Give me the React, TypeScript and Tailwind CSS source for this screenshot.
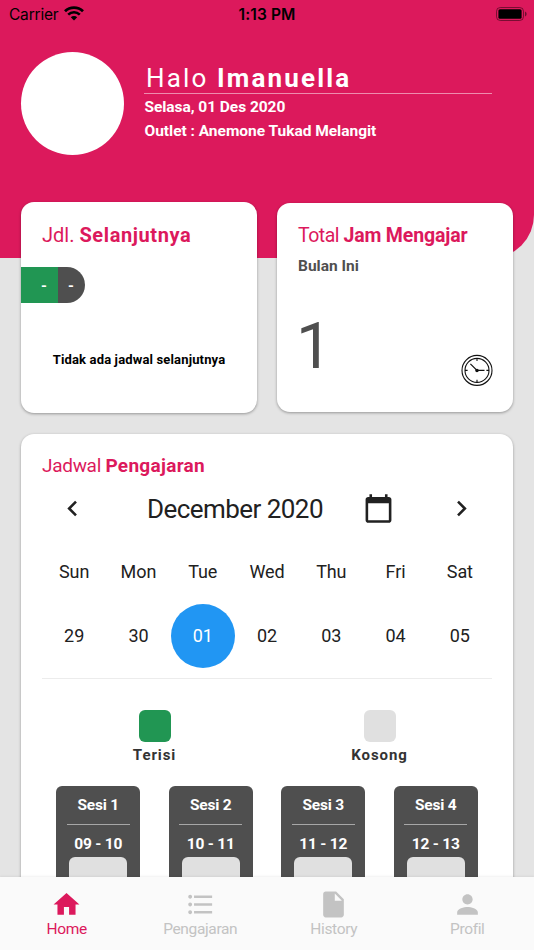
import type { ReactNode } from 'react'
import {
  MdCalendarToday,
  MdChevronLeft,
  MdChevronRight,
  MdFormatListBulleted,
  MdHome,
  MdInsertDriveFile,
  MdPerson,
} from 'react-icons/md'

const days = [
  { name: 'Sun', date: '29' },
  { name: 'Mon', date: '30' },
  { name: 'Tue', date: '01' },
  { name: 'Wed', date: '02' },
  { name: 'Thu', date: '03' },
  { name: 'Fri', date: '04' },
  { name: 'Sat', date: '05' },
]

const sessions = [
  { name: 'Sesi 1', time: '09 - 10' },
  { name: 'Sesi 2', time: '10 - 11' },
  { name: 'Sesi 3', time: '11 - 12' },
  { name: 'Sesi 4', time: '12 - 13' },
]

function StatusBar() {
  return (
    <div className="grid h-7 grid-cols-3 items-center pr-[7px] pl-[9px] font-['Inter',sans-serif] text-black">
      <div className="flex items-center gap-[6px]">
        <span className="text-[15.5px] leading-[29px] tracking-[-0.2px]">Carrier</span>
        <svg className="-mt-[2px]" width="20" height="15" viewBox="0 0 20 15" fill="none" stroke="black">
          <path d="M1 5.2a13 13 0 0 1 18 0" strokeWidth="2.8" />
          <path d="M4.2 8.6a8.4 8.4 0 0 1 11.6 0" strokeWidth="2.6" />
          <path d="M10 14.4 6.8 11.2a4.6 4.6 0 0 1 6.4 0z" fill="black" stroke="none" />
        </svg>
      </div>
      <span className="-ml-[2px] text-center text-[15.5px] leading-[29px] font-semibold tracking-[0.1px]">1:13 PM</span>
      <svg className="-mt-[2px] ml-auto" width="31" height="14" viewBox="0 0 31 14">
        <rect x="0.5" y="0.5" width="27" height="13" rx="3.8" fill="none" stroke="black" strokeOpacity="0.45" />
        <rect x="2.4" y="2.2" width="23.2" height="9.6" rx="1.6" />
        <path d="M29 4.6v4.8c1-.4 1.6-1.3 1.6-2.4S30 5 29 4.6z" fillOpacity="0.5" />
      </svg>
    </div>
  )
}

function ClockIcon() {
  return (
    <svg width="32" height="32" viewBox="0 0 32 32" fill="none" stroke="#111" strokeWidth="1.1">
      <circle cx="16" cy="16.4" r="15" />
      <circle cx="16" cy="16.4" r="12" />
      <path d="M16 4.4V7M16 25.8v2.6M4 16.4h2.6M25.4 16.4H28" />
      <path d="M9.4 9.8 16 16.4h7.5" strokeWidth="1.2" />
      <circle cx="16" cy="16.4" r="1.2" fill="#111" />
    </svg>
  )
}

function Card({ className, children }: { className: string; children: ReactNode }) {
  return <section className={`rounded-[13px] bg-white shadow-[0_1px_3px_rgba(0,0,0,0.35)] ${className}`}>{children}</section>
}

function Calendar() {
  return (
    <div className="text-[#212121]">
      <div className="mt-[10px] flex h-10 items-center">
        <div className="flex w-[61px] justify-center">
          <MdChevronLeft size={31} />
        </div>
        <span className="ml-[44px] w-[178px] pt-[2px] text-[26px] leading-10 tracking-[-0.55px] whitespace-nowrap">December 2020</span>
        <MdCalendarToday size={31} className="mt-px ml-[38px]" />
        <div className="ml-auto flex w-[61px] justify-center">
          <MdChevronRight size={31} />
        </div>
      </div>
      <div className="mt-3 grid grid-cols-7 text-center text-[18px] tracking-[-0.1px]">
        {days.map((day) => (
          <div key={day.name}>
            <div className="h-16 leading-16">{day.name}</div>
            <div className={day.date === '01' ? 'h-16 rounded-full bg-[#2196f3] leading-16 text-white' : 'h-16 leading-16'}>{day.date}</div>
          </div>
        ))}
      </div>
      <div className="mt-[10px] h-px bg-[#ececec]" />
    </div>
  )
}

function NavItem({ icon, label, active }: { icon: ReactNode; label: string; active?: boolean }) {
  return (
    <div className={active ? 'flex flex-col items-center text-[#dc195c]' : 'flex flex-col items-center text-[#c3c3c3]'}>
      {icon}
      <span className="text-[15.5px] leading-[18px] tracking-[-0.35px]">{label}</span>
    </div>
  )
}

export default function App() {
  return (
    <div className="flex h-[950px] w-[534px] flex-col overflow-hidden bg-[#e4e4e4] font-['Roboto',sans-serif]">
      <main className="min-h-0 flex-1 overflow-hidden">
        <header className="h-[258px] rounded-br-[43px] bg-[#dc195c]">
          <StatusBar />
          <div className="mt-6 flex pr-[42px] pl-[21px] text-white">
            <div className="size-[103px] shrink-0 rounded-full bg-white" />
            <div className="ml-5 flex-1 whitespace-nowrap">
              <h1 className="mt-[10px] h-[31px] pl-[2px] text-[26px] leading-[33px] tracking-[2.15px]">
                Halo <span className="font-bold">Imanuella</span>
              </h1>
              <div className="h-px bg-white/50" />
              <p className="mt-[2px] pl-[0.5px] text-[15.5px] leading-[23px] font-bold tracking-[-0.05px]">Selasa, 01 Des 2020</p>
              <p className="pl-[0.5px] text-[15.5px] leading-[24px] font-bold tracking-[-0.02px]">Outlet : Anemone Tukad Melangit</p>
            </div>
          </div>
        </header>

        <div className="-mt-14 flex items-start justify-between px-[21px]">
          <Card className="h-[211px] w-[236px] whitespace-nowrap">
            <h2 className="pt-[21px] pl-[21px] text-[20px] leading-6 text-[#dc195c]">
              Jdl. <span className="font-bold tracking-[0.6px]">Selanjutnya</span>
            </h2>
            <div className="mt-[20px] flex h-9 text-[15px] leading-[38px] font-bold text-white">
              <div className="w-[37px] bg-[#219653] pl-[20px]">-</div>
              <div className="w-[27px] rounded-r-full bg-[#4f4f4f] pl-[10px]">-</div>
            </div>
            <p className="mt-[46px] text-center text-[13px] leading-[21px] font-bold tracking-[0.15px] text-black">Tidak ada jadwal selanjutnya</p>
          </Card>
          <Card className="mt-px h-[209px] w-[236px] px-[21px] whitespace-nowrap">
            <h2 className="pt-[21px] text-[19.5px] leading-6 text-[#dc195c]">
              <span className="tracking-[-0.5px]">Total </span>
              <span className="font-bold tracking-[-0.15px]">Jam Mengajar</span>
            </h2>
            <p className="mt-[7px] text-[15.5px] leading-[22px] font-bold text-[#4f4f4f]">Bulan Ini</p>
            <div className="mt-[37px] flex justify-between">
              <span className="-ml-[2px] text-[64px] leading-[65px] text-[#4f4f4f]">1</span>
              <div className="-mr-px mt-[40px]">
                <ClockIcon />
              </div>
            </div>
          </Card>
        </div>

        <Card className="mx-[21px] mt-[21px] h-[520px] px-[21px]">
          <h2 className="pt-5 text-[19px] leading-6 text-[#dc195c]">
            <span className="tracking-[-0.3px]">Jadwal </span>
            <span className="font-bold tracking-[0.3px]">Pengajaran</span>
          </h2>
          <Calendar />
          <div className="mt-[31px] grid grid-cols-2 text-[15px] leading-[26px] font-bold tracking-[0.9px] text-[#333]">
            <div className="flex flex-col items-center">
              <div className="size-8 rounded-[6px] bg-[#219653]" />
              Terisi
            </div>
            <div className="flex flex-col items-center">
              <div className="size-8 rounded-[6px] bg-[#e0e0e0]" />
              Kosong
            </div>
          </div>
          <div className="mt-[18px] grid grid-cols-4 justify-items-center">
            {sessions.map((session) => (
              <div key={session.name} className="flex h-[150px] w-[84px] flex-col items-center rounded-[6px] bg-[#4f4f4f] text-[15.5px] font-bold tracking-[-0.2px] text-white">
                <div className="h-[38px] leading-[38px]">{session.name}</div>
                <div className="h-px w-[63px] bg-white/50" />
                <div className="h-8 leading-[38px]">{session.time}</div>
                <div className="h-14 w-[58px] rounded-t-[6px] bg-[#e0e0e0]" />
              </div>
            ))}
          </div>
        </Card>
      </main>

      <nav className="z-10 grid h-[73px] grid-cols-4 bg-[#fafafa] pt-3 shadow-[0_-1px_2px_rgba(0,0,0,0.06)]">
        <NavItem icon={<MdHome size={31} />} label="Home" active />
        <NavItem icon={<MdFormatListBulleted size={31} />} label="Pengajaran" />
        <NavItem icon={<MdInsertDriveFile size={31} />} label="History" />
        <NavItem icon={<MdPerson size={31} />} label="Profil" />
      </nav>
    </div>
  )
}
